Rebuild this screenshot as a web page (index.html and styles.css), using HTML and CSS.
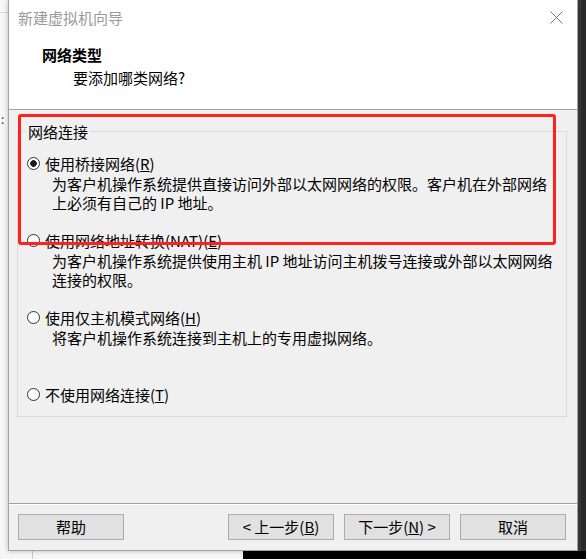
FILE: index.html
```html
<!DOCTYPE html>
<html lang="zh-CN">
<head>
    <meta charset="UTF-8">
    <meta name="viewport" content="width=device-width, initial-scale=1.0">
    <title>新建虚拟机向导</title>
    <link rel="stylesheet" href="styles.css">
</head>
<body>
    <div class="screen">
        <div class="row">
            <div class="edge-left">
                <div class="edge-line"></div>
                <div class="edge-dots">:</div>
            </div>
            <div class="dialog">
                <div class="top">
                    <div class="titlebar">
                        <span class="title">新建虚拟机向导</span>
                        <svg class="close" width="13" height="13" viewBox="0 0 13 13">
                            <path d="M0.5 0.5 L12.5 12.5 M12.5 0.5 L0.5 12.5" stroke="#7a7a7a" stroke-width="1" fill="none"/>
                        </svg>
                    </div>
                    <div class="heading">网络类型</div>
                    <div class="subheading">要添加哪类网络?</div>
                </div>
                <div class="content">
                    <fieldset class="group">
                        <legend>网络连接</legend>
                        <div class="options">
                            <div class="option">
                                <div class="option-label"><span class="radio checked"></span>使用桥接网络(<u>R</u>)</div>
                                <div class="option-desc">为客户机操作系统提供直接访问外部以太网网络的权限。客户机在外部网络<br>上必须有自己的 IP 地址。</div>
                            </div>
                            <div class="option">
                                <div class="option-label"><span class="radio"></span>使用网络地址转换(NAT)(<u>E</u>)</div>
                                <div class="option-desc">为客户机操作系统提供使用主机 IP 地址访问主机拨号连接或外部以太网网络<br>连接的权限。</div>
                            </div>
                            <div class="option">
                                <div class="option-label"><span class="radio"></span>使用仅主机模式网络(<u>H</u>)</div>
                                <div class="option-desc">将客户机操作系统连接到主机上的专用虚拟网络。</div>
                            </div>
                            <div class="option">
                                <div class="option-label"><span class="radio"></span>不使用网络连接(<u>T</u>)</div>
                            </div>
                        </div>
                    </fieldset>
                </div>
                <div class="footer">
                    <button class="btn">帮助</button>
                    <button class="btn btn-back">&lt; 上一步(<u>B</u>)</button>
                    <button class="btn">下一步(<u>N</u>) &gt;</button>
                    <button class="btn">取消</button>
                </div>
                <div class="highlight"></div>
            </div>
            <div class="edge-right"></div>
        </div>
        <div class="bottom">
            <div class="bottom-light"></div>
            <div class="bottom-dark"></div>
        </div>
    </div>
</body>
</html>
```

FILE: styles.css
```css
body {
    margin: 0;
    width: 586px;
    height: 559px;
    overflow: hidden;
    font-family: "Noto Sans CJK SC", "Noto Sans", sans-serif;
    font-size: 15px;
    color: #000;
    background-color: #000;
}

.screen {
    display: flex;
    flex-direction: column;
    height: 559px;
}

.row {
    display: flex;
    height: 551px;
}

/* window behind, left side */
.edge-left {
    width: 8px;
    flex: none;
    background-color: #f7f7f7;
}

.edge-line {
    height: 12px;
    border-bottom: 1px solid #d6d6d6;
}

.edge-dots {
    margin-top: 100px;
    padding-left: 1px;
    font-size: 12px;
    line-height: 12px;
    color: #333;
}

.edge-right {
    flex: 1;
    background: linear-gradient(90deg, #3b3b3b 0 3px, #2a2a2a 3px);
}

.bottom {
    display: flex;
    height: 8px;
}

.bottom-light {
    width: 243px;
    background: linear-gradient(90deg, transparent 32px, #b3cdeb 32px 33px, transparent 33px), #f6f6f6;
}

.bottom-dark {
    flex: 1;
    background-color: #000;
}

/* dialog */
.dialog {
    position: relative;
    width: 570px;
    flex: none;
    box-sizing: border-box;
    display: flex;
    flex-direction: column;
    border: 1px solid #a3a3a3;
    border-top: 0;
    background-color: #f0f0f0;
    box-shadow: 0 0 5px rgba(0, 0, 0, 0.25);
}

.top {
    height: 109px;
    background-color: #fff;
    border-bottom: 1px solid #a0a0a0;
}

.titlebar {
    height: 35px;
    display: flex;
    align-items: center;
    justify-content: space-between;
    padding: 0 14px 0 9px;
}

.title {
    color: #999;
    line-height: 20px;
}

.close {
    display: block;
}

.heading {
    margin-top: 10px;
    padding-left: 33px;
    font-weight: bold;
    line-height: 20px;
}

.subheading {
    margin-top: 3px;
    padding-left: 64px;
    line-height: 20px;
}

.content {
    flex: 1;
    padding: 12px 10px 0 8px;
}

.group {
    margin: 0;
    padding: 0;
    min-width: 0;
    border: 1px solid #dcdcdc;
}

.group legend {
    margin-left: 8px;
    padding: 0 2px;
    line-height: 19px;
}

.options {
    padding: 13px 0 12px 9px;
}

.option {
    height: 77px;
}

.option:last-child {
    height: auto;
}

.option-label {
    display: flex;
    align-items: center;
    line-height: 19px;
}

.radio {
    width: 13px;
    height: 13px;
    box-sizing: border-box;
    margin-right: 5px;
    border: 1px solid #333;
    border-radius: 50%;
    background-color: #fff;
}

.radio.checked {
    background: radial-gradient(circle, #1a1a1a 0 3px, #fff 3.6px);
}

.option-desc {
    margin-top: 1px;
    padding-left: 25px;
    line-height: 19px;
}

.footer {
    display: flex;
    gap: 10px;
    padding: 10px 11px 10px 9px;
    border-top: 1px solid #a0a0a0;
    box-shadow: inset 0 1px #fff;
}

.btn {
    width: 106px;
    height: 26px;
    padding: 0;
    border: 1px solid #adadad;
    background-color: #e1e1e1;
    font-family: inherit;
    font-size: 15px;
    line-height: 24px;
    color: #000;
}

.btn-back {
    margin-left: auto;
}

/* red annotation box drawn over the dialog */
.highlight {
    position: absolute;
    left: 9px;
    top: 114px;
    width: 538px;
    height: 131px;
    box-sizing: border-box;
    border: 3px solid #ff2020;
    border-radius: 3px;
    pointer-events: none;
}
```
